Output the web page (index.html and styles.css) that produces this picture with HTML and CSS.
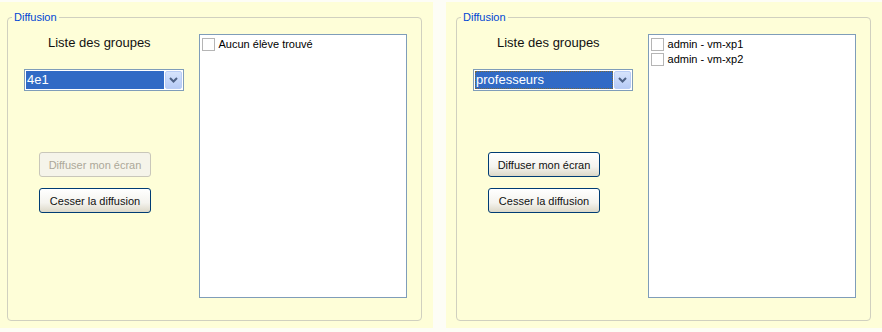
FILE: index.html
```html
<!DOCTYPE html>
<html lang="fr">
<head>
  <meta charset="UTF-8">
  <title>Diffusion</title>
  <link rel="stylesheet" href="styles.css">
</head>
<body>

  <div class="screen">

    <div class="panel panel-left">
      <fieldset class="group">
        <legend>Diffusion</legend>
        <div class="group-body">
          <div class="controls">
            <div class="caption">Liste des groupes</div>
            <div class="combo">
              <span class="combo-value">4e1</span>
              <span class="combo-btn">
                <svg width="9" height="6" viewBox="0 0 9 6"><path d="M1 1 L4.5 4.5 L8 1" fill="none" stroke="#4d6185" stroke-width="2"/></svg>
              </span>
            </div>
            <button class="btn" disabled>Diffuser mon écran</button>
            <button class="btn btn-second">Cesser la diffusion</button>
          </div>
          <div class="listbox">
            <div class="item"><span class="check"></span>Aucun élève trouvé</div>
          </div>
        </div>
      </fieldset>
    </div>

    <div class="panel panel-right">
      <fieldset class="group">
        <legend>Diffusion</legend>
        <div class="group-body">
          <div class="controls">
            <div class="caption">Liste des groupes</div>
            <div class="combo combo-focus">
              <span class="combo-value">professeurs</span>
              <span class="combo-btn">
                <svg width="9" height="6" viewBox="0 0 9 6"><path d="M1 1 L4.5 4.5 L8 1" fill="none" stroke="#4d6185" stroke-width="2"/></svg>
              </span>
            </div>
            <button class="btn">Diffuser mon écran</button>
            <button class="btn btn-second">Cesser la diffusion</button>
          </div>
          <div class="listbox">
            <div class="item"><span class="check"></span>admin - vm-xp1</div>
            <div class="item"><span class="check"></span>admin - vm-xp2</div>
          </div>
        </div>
      </fieldset>
    </div>

  </div>

</body>
</html>
```

FILE: styles.css
```css
body { margin: 0; background: #fdfdf6; font-family: "Liberation Sans", Arial, sans-serif; font-size: 11px; color: #000; overflow: hidden; }
.screen { display: flex; gap: 13px; margin-left: -3px; padding-top: 2px; height: 330px; }
.panel { width: 436px; height: 326px; background: #fefed8; display: flex; flex-direction: column; }

.group { margin: 9px 11px 0 10px; padding: 10px 14px 22px 16px; border: 1px solid #d0d0bf; border-radius: 4px; min-width: 0; }
.group legend { padding: 0 2px; margin-left: -12px; color: #0046d5; font-size: 11px; line-height: 13px; }
.group-body { display: flex; }

.controls { width: 175px; display: flex; flex-direction: column; align-items: flex-start; }
.caption { margin: 1px 0 0 24px; font-size: 13px; line-height: 16px; color: #111; }

.combo { margin-top: 18px; width: 160px; height: 22px; box-sizing: border-box; border: 1px solid #7f9db9; background: #fff; padding: 1px; display: flex; gap: 1px; }
.combo-value { flex: 1; background: #316ac5; color: #fff; font-size: 13px; line-height: 18px; padding-left: 1px; box-sizing: border-box; }
.combo-focus .combo-value { border: 1px dotted #7a6a3a; line-height: 16px; padding-left: 0; }
.combo-btn { width: 17px; height: 18px; box-sizing: border-box; border: 1px solid #b9cdf6; border-radius: 2px; background: linear-gradient(#d6e3fc, #b7cbf6); display: flex; align-items: center; justify-content: center; }

.btn { margin: 61px 0 0 15px; width: 112px; height: 25px; border: 1px solid #003c74; border-radius: 3px; background: linear-gradient(#ffffff, #f4f3ee 60%, #dcd8c8); font-family: inherit; font-size: 11px; color: #111; padding: 0; }
.btn:disabled { border-color: #c9c7ba; background: #f5f4ea; color: #aca899; }
.btn-second { margin-top: 11px; }

.listbox { width: 209px; height: 264px; box-sizing: border-box; border: 1px solid #7f9db9; background: #fff; padding: 2px; }
.item { display: flex; align-items: center; height: 15px; line-height: 15px; }
.check { width: 13px; height: 13px; box-sizing: border-box; border: 1px solid #b5b5b5; background: #fff; margin-right: 4px; }
```
